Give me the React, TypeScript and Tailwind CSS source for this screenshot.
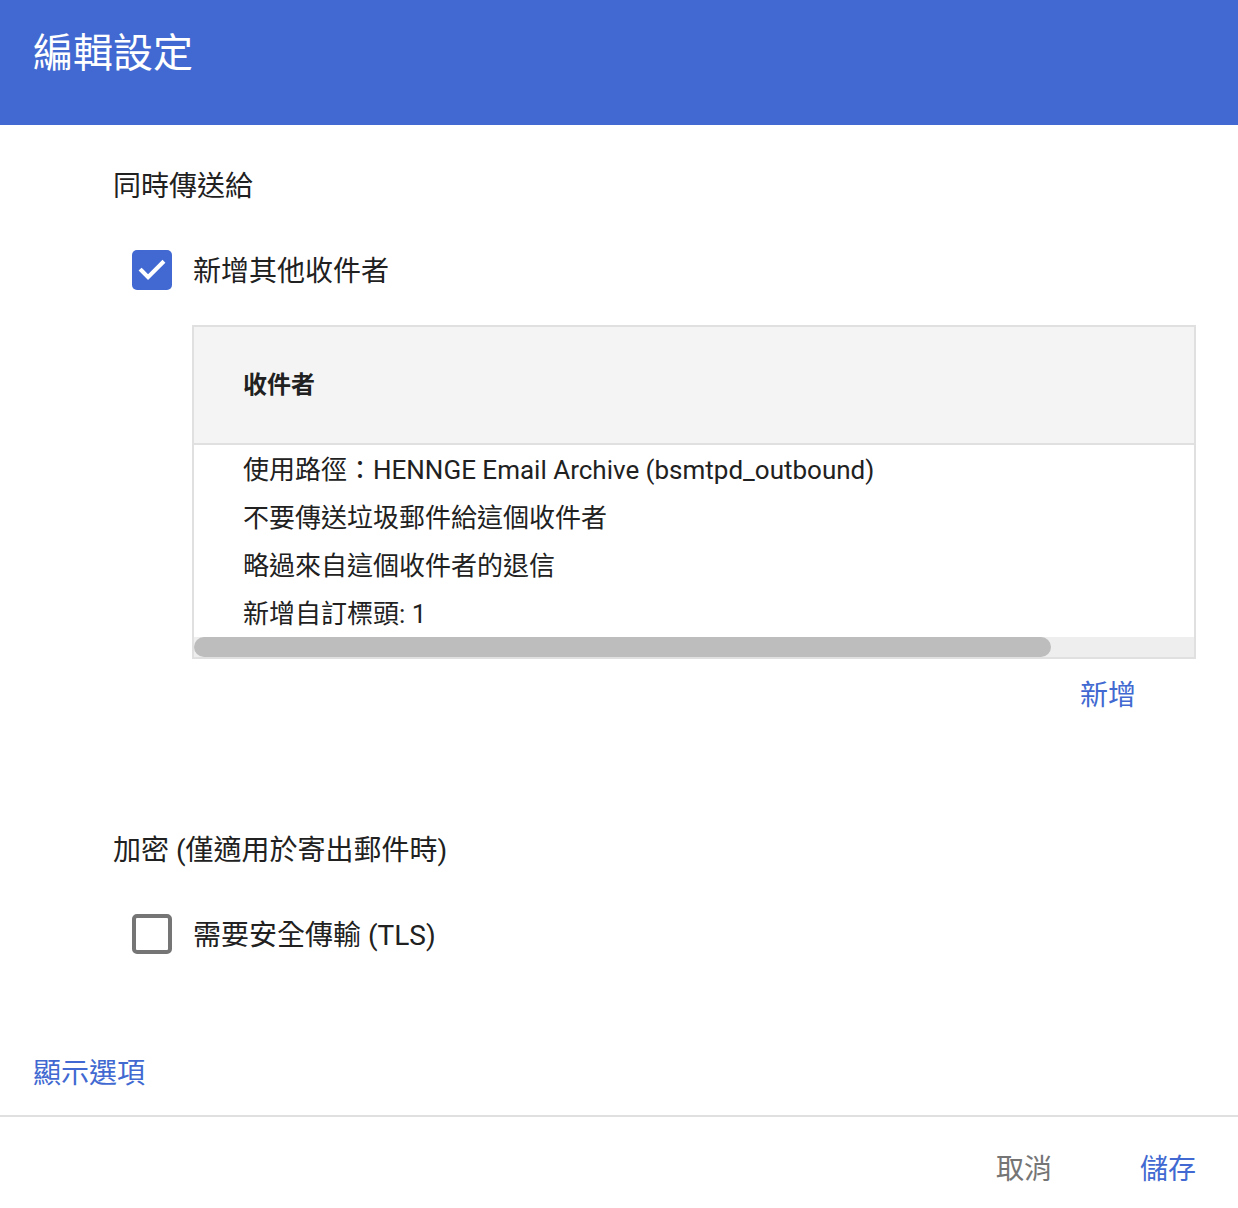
import React from 'react';

const font = { fontFamily: 'Roboto, "Noto Sans CJK TC", "Noto Sans", sans-serif' };

// Material-like checkbox
const Checkbox: React.FC<{ checked?: boolean }> = ({ checked }) =>
  checked ? (
    <div className="w-[40px] h-[40px] rounded-[5px] bg-[#4169d1] flex items-center justify-center flex-shrink-0">
      <svg width="34" height="34" viewBox="0 0 24 24" fill="none">
        <path d="M4.6 12.4l4.6 4.6L19.4 6.8" stroke="#fff" strokeWidth="2.9" strokeLinecap="square" />
      </svg>
    </div>
  ) : (
    <div className="w-[40px] h-[40px] rounded-[5px] border-[4px] border-[#757575] bg-white flex-shrink-0" />
  );

const rows = [
  '使用路徑：HENNGE Email Archive (bsmtpd_outbound)',
  '不要傳送垃圾郵件給這個收件者',
  '略過來自這個收件者的退信',
  '新增自訂標頭: 1',
];

export default function App() {
  return (
    <div className="w-[1238px] h-[1208px] bg-white text-[#212121] overflow-hidden" style={font}>
      {/* Header */}
      <div className="h-[125px] bg-[#4169d1] px-[33px] pt-[30px]">
        <h1 className="text-[40px] leading-[48px] text-white font-normal">編輯設定</h1>
      </div>

      {/* Body */}
      <div className="pl-[113px] pr-[42px]">
        <div className="mt-[42px] text-[28px] leading-[40px]">同時傳送給</div>

        <div className="mt-[43px] ml-[19px] flex items-start gap-[21px]">
          <Checkbox checked />
          <span className="pt-[2px] text-[28px] leading-[40px]">新增其他收件者</span>
        </div>

        {/* Recipients table */}
        <div className="mt-[33px] ml-[79px] border-2 border-[#e0e0e0]">
          <div className="h-[118px] bg-[#f4f4f4] border-b-2 border-[#e0e0e0] pl-[49px] flex items-center">
            <span className="text-[24px] font-bold leading-[32px]">收件者</span>
          </div>
          {rows.map((r) => (
            <div key={r} className="h-[48px] pl-[49px] pt-[2px] flex items-center text-[26px] leading-[40px] whitespace-nowrap">
              {r}
            </div>
          ))}
          <div className="h-[20px] bg-[#eeeeee]">
            <div className="h-full w-[857px] rounded-full bg-[#bdbdbd]" />
          </div>
        </div>

        <div className="mt-[17px] flex justify-end pr-[60px]">
          <span className="text-[28px] leading-[40px] text-[#4169d1]">新增</span>
        </div>

        <div className="mt-[115px] text-[28px] leading-[40px]">加密 (僅適用於寄出郵件時)</div>

        <div className="mt-[43px] ml-[19px] flex items-start gap-[21px]">
          <Checkbox />
          <span className="pt-[2px] text-[28px] leading-[40px]">需要安全傳輸 (TLS)</span>
        </div>
      </div>

      <div className="mt-[98px] pl-[33px] text-[28px] leading-[40px] text-[#4169d1]">顯示選項</div>

      <div className="mt-[21px] h-[2px] bg-[#e0e0e0]" />

      {/* Footer */}
      <div className="mt-[33px] flex justify-end items-center gap-[88px] pr-[42px]">
        <span className="text-[28px] leading-[40px] text-[#757575]">取消</span>
        <span className="text-[28px] leading-[40px] text-[#4169d1]">儲存</span>
      </div>
    </div>
  );
}
